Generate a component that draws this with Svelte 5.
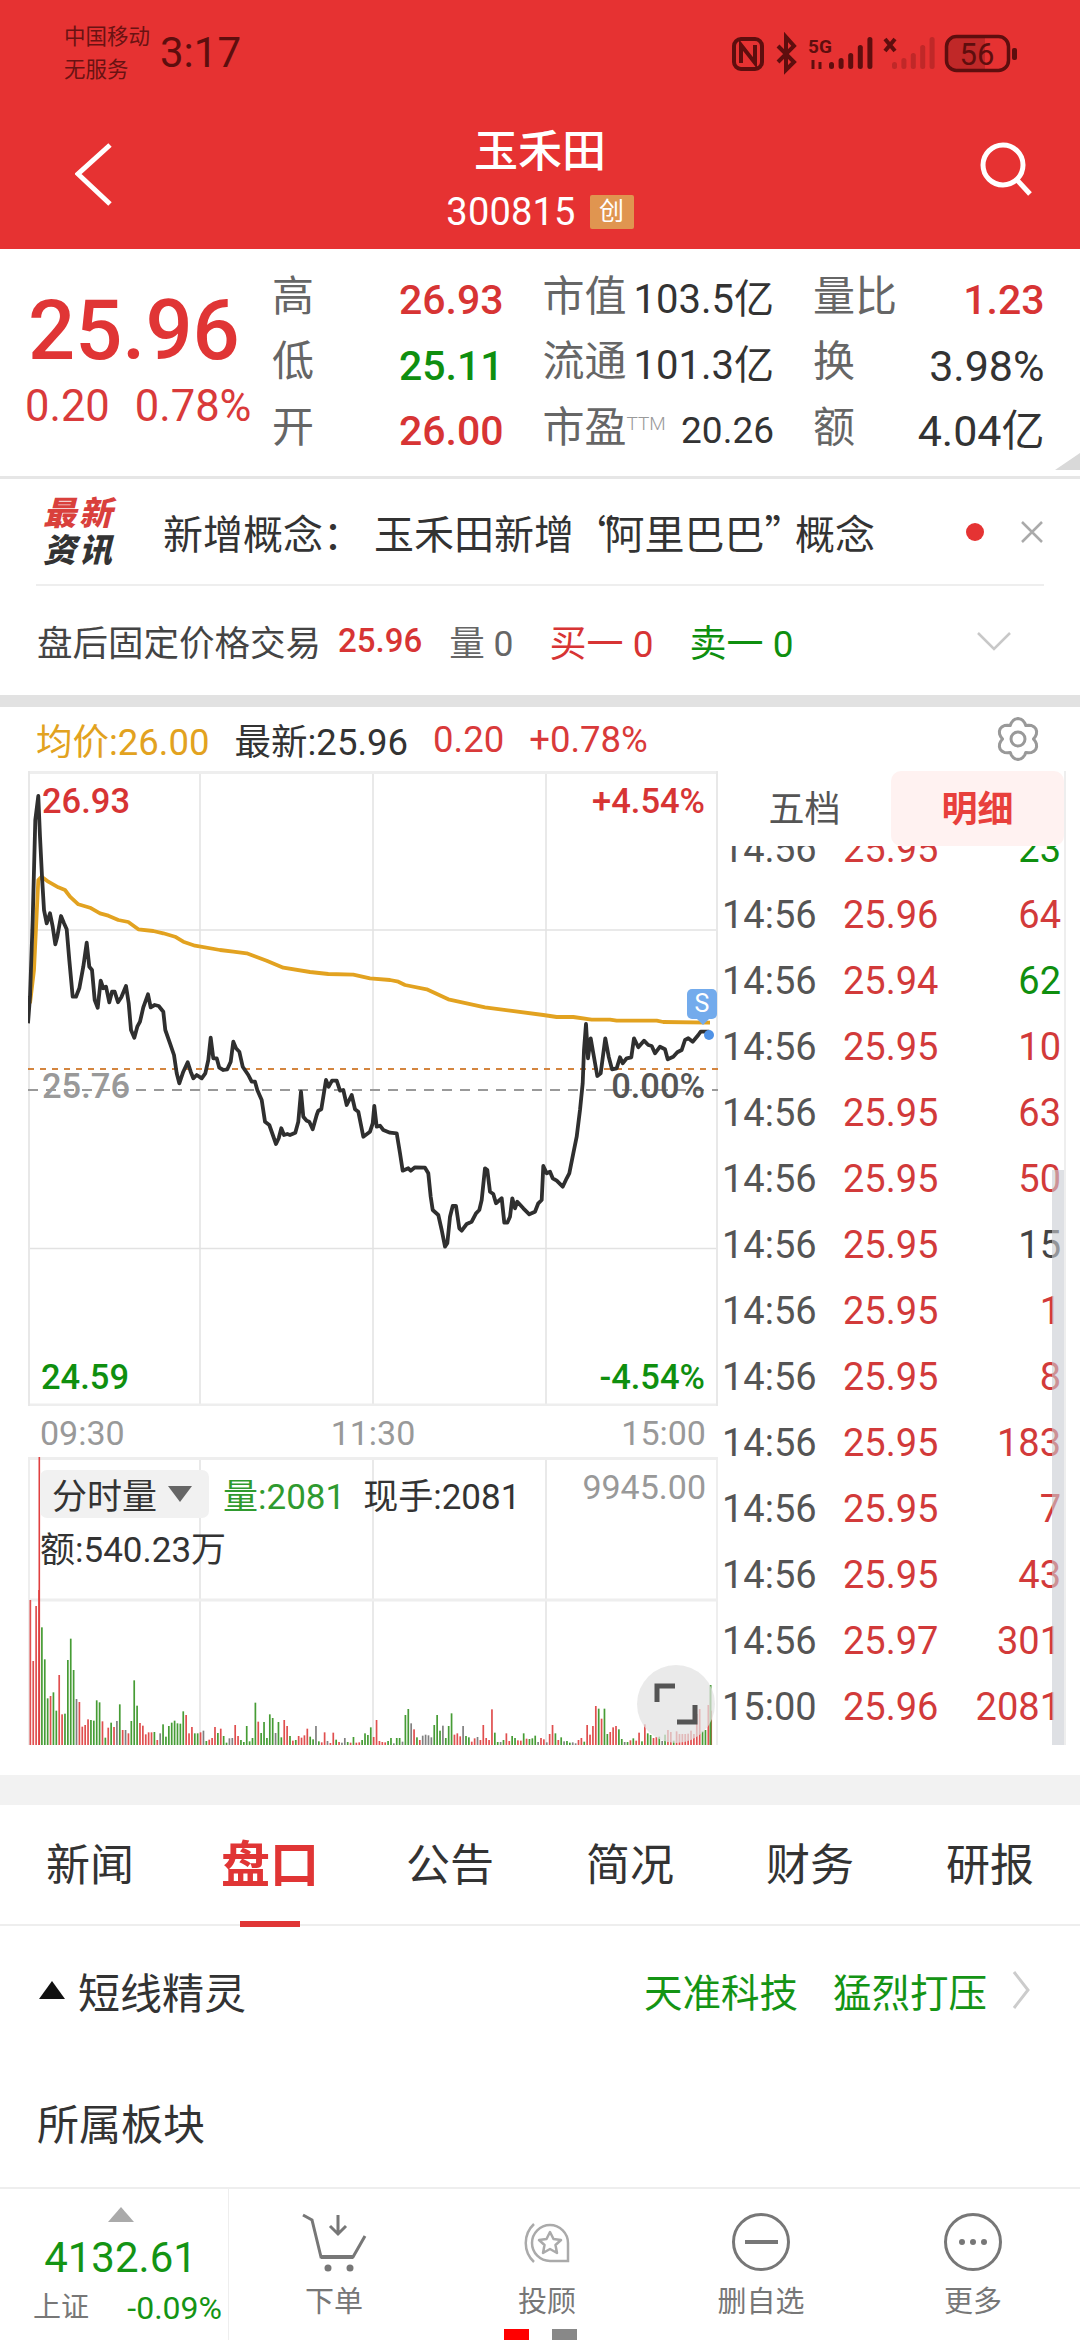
<script>
  const parse = (s, ox, oy) => s.trim().split(/\s+/).map((p) => {
    const [x, y] = p.split(',').map(Number);
    return `${(ox + x / 3).toFixed(1)},${(oy + y / 3).toFixed(1)}`;
  }).join(' ');

  const black =
    parse('24,760 30,680 38,450 46,150 55,78 60,200 66,320 72,420 80,460 90,430 98,470 106,523 112,500 123,438 132,460 140,478 148,570 158,680 168,680 178,655 190,590 200,518 208,590 216,600 224,690 233,713 242,632 250,655 258,650 268,697 276,665 284,665 294,697 304,682 318,648 326,700 333,780 343,803 352,770 360,755 370,712 384,673 392,712 404,705 416,708 430,725 436,780 450,820 462,855 470,910 478,940 490,905 503,877 512,905 520,925 530,915 545,925 556,910 565,870 572,803 580,865 590,865 598,893 610,900 622,898 632,875 640,815 648,835 658,845 668,890 685,915 695,935 705,935 712,960 725,990 735,1055 748,1065 768,1122 776,1105 784,1075 792,1095 802,1092 810,1095 826,1088 835,1055 843,965 850,1040 860,1052 868,1055 878,1078 890,1035 895,1022 904,1018 918,930 926,950 936,932 950,932 960,962 970,960 980,1005 995,975 1005,1018 1015,1025 1030,1100 1050,1085', 20, 770) +
    ' ' +
    parse('8,520 13,468 20,530 30,527 40,540 60,548 80,550 90,610 98,662 115,655 122,662 135,652 165,653 175,670 182,740 188,780 205,795 215,840 225,890 232,880 240,800 248,768 258,768 268,835 275,842 290,822 305,815 318,790 328,780 335,750 345,655 352,660 360,725 370,732 378,760 395,745 403,818 412,818 420,800 427,745 435,775 442,755 460,775 478,793 495,785 505,760 515,750 520,648 530,670 540,665 548,685 560,692 578,710 590,685 598,670 610,610 620,560 630,480 638,400 642,300 648,222 654,325 662,265 670,310 682,378 692,370 706,265 716,320 726,358 740,355 750,322 758,340 770,325 784,322 792,265 805,292 822,272 835,285 845,288 855,310 870,290 885,298 893,328 910,320 922,307 935,300 945,270 955,265 968,275 985,255 992,245 1018,245', 370, 950);

  const gold =
    parse('30,700 42,600 50,430 55,330 65,320 85,335 115,352 135,360 150,380 175,403 210,413 240,430 265,437 295,450 325,456 355,478 400,483 430,490 465,500 490,515 525,527 600,540 640,545 680,550 720,565 740,572 790,593 870,606 925,612 1000,614 1050,625', 20, 770) +
    ' ' +
    parse('60,90 85,95 105,105 170,118 235,148 345,172 420,182 520,195 560,201 610,201 665,209 720,209 740,212 860,212 880,216 1020,218', 370, 950);

  const barData =
    '30r 213r 48r 0r 112g 208g 325g 318r 307g 362g 255r 373r 371g 210g 146g 240g 327x 336r 410r 405r 388r 390g 392g 331g 337g 394r 443g 413r 398g 411r 393x 343g 420r 420x 430r 393g 271g 347g 399r 407r 433r 427r 427r 426g 450r 430x 403g 440g 408g 398g 392g 400g 401g 364g 375r 430r 411r 430g 430g 427r 422x 453g 449r 444r 411r 429g 416r 438g 458g 445x 444x 405r 438r 450g 456g 408g 454g 444g 338g 395r 429g 396g 444g 373g 384g 429x 396g 442g 390r 408r 438g 452r 450g 438r 443r 436r 416r 440g 448g 408x 454g 457r 427r 453x 459r 428r 449g 456r 458x 444x 456g 458r 441g 458r 457r 450g 430g 435g 412g 441r 390r ' +
    '453r 456r 457r 453g 444g 460x 444g 444g 455x 375g 357g 400x 418r 442g 450r 437x 434x 436x 442x 405g 375g 422g 407x 444g 408g 370g 434r 430r 439r 408x 438g 442g 455r 445r 441x 450r 405r 444r 450r 358r 428g 456g 456x 450g 430r 453r 438g 444g 451r 452r 430g 446r 447g 445g 437g 456x 444r 448r 457x 432r 405r 430g 450r 442g 454x 453g 458g 457x 460x 450r 444r 455g 405r 434r 408r 348r 356g 386r 356g 432g 426r 412r 408r 418g 447g 456x 456g 451r 445g 452r 428r 454g 403r 430g 435g 444r 441r 440g 453x 434g 420r 426r 452g 424r 432r 432r 432r 431r 422r 432r 372r 357r 424g 420g 345r 362r';
  const colors = { r: '#e04f4f', g: '#469c35', x: '#808080' };
  const bars = barData.trim().split(/\s+/).map((t, i) => ({
    x: 29.5 + i * 2.885,
    h: (465 - parseInt(t)) / 3,
    c: colors[t.slice(-1)]
  }));

  const gearPoints = Array.from({ length: 48 }, (_, i) => {
    const a = (i * 7.5 * Math.PI) / 180;
    const r = 15.5 + 5 * Math.abs(Math.sin(3 * a));
    return `${(22 + r * Math.cos(a)).toFixed(1)},${(22 + r * Math.sin(a)).toFixed(1)}`;
  }).join(' ');

  const tradeRows = [
    ['14:56', '25.95', '23', 'g'],
    ['14:56', '25.96', '64', 'r'],
    ['14:56', '25.94', '62', 'g'],
    ['14:56', '25.95', '10', 'r'],
    ['14:56', '25.95', '63', 'r'],
    ['14:56', '25.95', '50', 'r'],
    ['14:56', '25.95', '15', 'd'],
    ['14:56', '25.95', '1', 'r'],
    ['14:56', '25.95', '8', 'r'],
    ['14:56', '25.95', '183', 'r'],
    ['14:56', '25.95', '7', 'r'],
    ['14:56', '25.95', '43', 'r'],
    ['14:56', '25.97', '301', 'r'],
    ['15:00', '25.96', '2081', 'r']
  ];
  const tabs = ['新闻', '盘口', '公告', '简况', '财务', '研报'];
  const signalTops = [62, 58, 53, 45, 37];
</script>

<div class="page">
  <header class="header">
    <div class="status">
      <div class="carrier"><span>中国移动</span><span>无服务</span></div>
      <div class="clock">3:17</div>
      <svg class="status-icons" viewBox="725 30 295 45" width="295" height="45" aria-hidden="true">
        <rect x="734" y="39" width="28" height="30" rx="7" fill="none" stroke="#5e0e0e" stroke-width="4" />
        <path d="M741 63V45l14 18V45" fill="none" stroke="#5e0e0e" stroke-width="4" />
        <path d="M778 46l16 16-8 8V37l8 9-16 16" fill="none" stroke="#5e0e0e" stroke-width="4" />
        <text x="808" y="53" class="five-g">5G</text>
        <path d="M813 60v9M820 62v7" stroke="#5e0e0e" stroke-width="3" />
        {#each signalTops as t, i}
          <rect x={829 + i * 9.6} y={t} width="5" height={69 - t} rx="2.500" fill="#5e0e0e" />
          <rect x={892 + i * 9.4} y={t} width="5" height={69 - t} rx="2.500" fill="#5e0e0e" opacity="0.28" />
        {/each}
        <path d="M885 39l10 12M895 39l-10 12" stroke="#5e0e0e" stroke-width="4" />
        <rect x="946.500" y="36.500" width="62" height="34" rx="10" fill="none" stroke="#5e0e0e" stroke-width="3.500" />
        <path d="M957 38h28v31h-28a9 9 0 0 1-9-9V47a9 9 0 0 1 9-9z" fill="#5e0e0e" opacity="0.28" />
        <rect x="1012" y="48" width="5" height="12" rx="2" fill="#5e0e0e" />
        <text x="977" y="65" class="batt">56</text>
      </svg>
    </div>
    <div class="nav">
      <svg width="40" height="66" viewBox="0 0 40 66" aria-hidden="true">
        <polyline points="35,3 3,32 35,62" fill="none" stroke="#fff" stroke-width="5" />
      </svg>
      <div class="title">
        <div class="name">玉禾田</div>
        <div class="code"><span>300815</span><span class="chuang">创</span></div>
      </div>
      <svg width="54" height="56" viewBox="0 0 54 56" aria-hidden="true">
        <circle cx="24" cy="23" r="20" fill="none" stroke="#fff" stroke-width="5" />
        <path d="M38 38l13 14" stroke="#fff" stroke-width="5" />
      </svg>
    </div>
  </header>

  <section class="quote">
    <div class="quote-main">
      <div class="price">25.96</div>
      <div class="change"><span>0.20</span><span>0.78%</span></div>
    </div>
    <div class="quote-grid">
      <div class="cell"><span class="lbl">高</span><span class="val up">26.93</span></div>
      <div class="cell"><span class="lbl">市值</span><span class="val dark">103.5亿</span></div>
      <div class="cell"><span class="lbl">量比</span><span class="val up">1.23</span></div>
      <div class="cell"><span class="lbl">低</span><span class="val down">25.11</span></div>
      <div class="cell"><span class="lbl">流通</span><span class="val dark">101.3亿</span></div>
      <div class="cell"><span class="lbl">换</span><span class="val dark wide">3.98%</span></div>
      <div class="cell"><span class="lbl">开</span><span class="val up">26.00</span></div>
      <div class="cell"><span class="lbl">市盈<sup>TTM</sup></span><span class="val dark small">20.26</span></div>
      <div class="cell"><span class="lbl">额</span><span class="val dark wide">4.04亿</span></div>
    </div>
    <span class="corner"></span>
  </section>

  <section class="news">
    <div class="news-logo"><span class="l1">最新</span><span class="l2">资讯</span></div>
    <div class="news-text"><span class="colon">新增概念：</span>玉禾田新增<span class="quote-mark">“</span>阿里巴巴<span class="quote-mark">”</span>概念</div>
    <span class="dot"></span>
    <svg width="24" height="24" viewBox="0 0 24 24" aria-hidden="true">
      <path d="M2 2l20 20M22 2L2 22" stroke="#aaa" stroke-width="2.500" />
    </svg>
  </section>

  <section class="after">
    <span class="after-title">盘后固定价格交易</span>
    <span class="after-price">25.96</span>
    <span class="after-vol">量 0</span>
    <span class="after-buy">买一 0</span>
    <span class="after-sell">卖一 0</span>
    <svg width="36" height="20" viewBox="0 0 36 20" aria-hidden="true">
      <polyline points="2,2 18,18 34,2" fill="none" stroke="#c8c8c8" stroke-width="2.500" />
    </svg>
  </section>

  <div class="band"></div>

  <div class="legend">
    <span class="avg">均价:26.00</span>
    <span class="latest">最新:25.96</span>
    <span class="chg">0.20</span>
    <span class="chg">+0.78%</span>
    <svg class="gear" width="44" height="44" viewBox="0 0 44 44" aria-hidden="true">
      <polygon points={gearPoints} fill="none" stroke="#999" stroke-width="3" stroke-linejoin="round" />
      <circle cx="22" cy="22" r="7" fill="none" stroke="#999" stroke-width="3" />
    </svg>
  </div>

  <div class="market">
    <div class="chart-col">
      <div class="price-chart">
        <svg viewBox="28 771 690 635" width="690" height="635" aria-hidden="true">
          <g stroke="#e2e2e2" stroke-width="1.500">
            <path d="M200 771V1406M373 771V1406M546 771V1406" />
            <path d="M28 930H718M28 1248.500H718" />
          </g>
          <path d="M28 772.500H718M28 1405H718" stroke="#eee" stroke-width="3" />
          <path d="M29 771V1406M717 771V1406" stroke="#e8e8e8" stroke-width="2" />
          <path d="M28 1069H718" stroke="#d4853f" stroke-width="2" stroke-dasharray="6 6" />
          <path d="M28 1090H718" stroke="#999" stroke-width="2" stroke-dasharray="10 8" />
          <polyline points={gold} fill="none" stroke="#e2a220" stroke-width="3.800" stroke-linejoin="round" />
          <polyline points={black} fill="none" stroke="#2f2f2f" stroke-width="3.800" stroke-linejoin="round" />
          <path d="M697 1019h12l-6 6z" fill="#73abec" />
          <circle cx="709" cy="1035" r="5" fill="#4f92e6" />
        </svg>
        <span class="tag hi">26.93</span>
        <span class="tag hi-p">+4.54%</span>
        <span class="tag base">25.76</span>
        <span class="tag base-p">0.00%</span>
        <span class="tag lo">24.59</span>
        <span class="tag lo-p">-4.54%</span>
        <span class="s-badge">S</span>
      </div>
      <div class="axis"><span>09:30</span><span>11:30</span><span>15:00</span></div>
      <div class="vol-chart">
        <svg viewBox="28 1457 690 288" width="690" height="288" aria-hidden="true">
          <path d="M200 1457V1745M373 1457V1745M546 1457V1745" stroke="#e2e2e2" stroke-width="1.500" />
          <path d="M28 1458.500H718M28 1600H718" stroke="#eee" stroke-width="3" />
          <path d="M29 1457V1745M717 1457V1745" stroke="#eee" stroke-width="2" />
          {#each bars as b}
            <rect x={b.x} y={1745 - b.h} width="1.700" height={b.h} fill={b.c} />
          {/each}
          <rect x="38.500" y="1457" width="1.600" height="288" fill="#e04040" />
          <rect x="709.500" y="1685" width="2" height="60" fill="#469c35" />
        </svg>
        <div class="vol-info">
          <div class="vol-line">
            <span class="vol-pill">分时量<i class="caret"></i></span>
            <span class="vol-green">量:2081</span>
            <span class="vol-now">现手:2081</span>
          </div>
          <div class="vol-amount">额:540.23万</div>
        </div>
        <span class="vol-max">9945.00</span>
        <span class="expand">
          <svg width="44" height="42" viewBox="0 0 44 42" aria-hidden="true">
            <path d="M3 19V3h18M41 22v17H23" fill="none" stroke="#555" stroke-width="5" />
          </svg>
        </span>
      </div>
    </div>

    <div class="detail-col">
      <div class="detail-tabs">
        <span class="dt">五档</span>
        <span class="dt on">明细</span>
      </div>
      <div class="trades">
        <div class="trade-inner">
          {#each tradeRows as r}
            <div class="trade">
              <span class="t">{r[0]}</span>
              <span class="p">{r[1]}</span>
              <span class="v {r[3]}">{r[2]}</span>
            </div>
          {/each}
        </div>
        <span class="scroll"></span>
      </div>
    </div>
  </div>

  <div class="gap"></div>
  <div class="band2"></div>

  <nav class="tabs">
    {#each tabs as tab, i}
      <span class="tab" class:active={i === 1}>{tab}</span>
    {/each}
  </nav>

  <section class="sprite">
    <span class="tri"></span>
    <span class="sprite-title">短线精灵</span>
    <span class="sprite-green first">天准科技</span>
    <span class="sprite-green">猛烈打压</span>
    <svg width="18" height="40" viewBox="0 0 18 40" aria-hidden="true">
      <polyline points="2,2 16,20 2,38" fill="none" stroke="#ccc" stroke-width="3" />
    </svg>
  </section>

  <section class="sector">所属板块</section>

  <footer class="bottom">
    <div class="index">
      <span class="idx-tri"></span>
      <span class="idx-num">4132.61</span>
      <div class="idx-row"><span class="idx-name">上证</span><span class="idx-pct">-0.09%</span></div>
    </div>
    <div class="action a1">
      <svg width="66" height="64" viewBox="301 2212 66 64" aria-hidden="true">
        <path d="M303 2215l9 5 9 37h32l12-21" fill="none" stroke="#777" stroke-width="3" />
        <path d="M321 2257h32" stroke="#777" stroke-width="4" />
        <path d="M338 2215v19M330 2226l8 8 8-8" fill="none" stroke="#777" stroke-width="3" />
        <circle cx="328" cy="2268" r="3.500" fill="#777" />
        <circle cx="350" cy="2268" r="3.500" fill="#777" />
      </svg>
      <span>下单</span>
    </div>
    <div class="action a2">
      <svg width="66" height="64" viewBox="514 2212 66 64" aria-hidden="true">
        <path d="M568 2261h-18a18 18 0 1 1 18-18z" fill="none" stroke="#aaa" stroke-width="2.500" />
        <path d="M534 2224a26 26 0 0 0 0 38" fill="none" stroke="#aaa" stroke-width="2.500" />
        <path d="M550 2232l3.500 7 7.500 1-5.500 5 1.500 8-7-4-7 4 1.500-8-5.500-5 7.500-1z" fill="none" stroke="#aaa" stroke-width="2.500" stroke-linejoin="round" />
      </svg>
      <span>投顾</span>
    </div>
    <div class="action a3">
      <svg width="66" height="64" viewBox="728 2212 66 64" aria-hidden="true">
        <circle cx="761" cy="2242" r="27.500" fill="none" stroke="#777" stroke-width="3" />
        <path d="M745 2242h33" stroke="#777" stroke-width="4" />
      </svg>
      <span>删自选</span>
    </div>
    <div class="action a4">
      <svg width="66" height="64" viewBox="940 2212 66 64" aria-hidden="true">
        <circle cx="973" cy="2242" r="27.500" fill="none" stroke="#777" stroke-width="3" />
        <circle cx="962" cy="2242" r="3" fill="#777" />
        <circle cx="973" cy="2242" r="3" fill="#777" />
        <circle cx="984" cy="2242" r="3" fill="#777" />
      </svg>
      <span>更多</span>
    </div>
    <div class="pager"><span class="red"></span><span class="grey"></span></div>
  </footer>
</div>

<style>
  :global(body) { margin: 0; background: #fff; }
  :global(#app *) { box-sizing: border-box; }
  .page {
    width: 1080px;
    height: 2340px;
    overflow: hidden;
    position: relative;
    display: flex;
    flex-direction: column;
    font-family: Roboto, "Noto Sans CJK SC", sans-serif;
    color: #333;
    background: #fff;
  }

  .header { height: 249px; background: #e63232; color: #fff; flex: none; }
  .status { height: 104px; display: flex; align-items: flex-start; padding: 20px 0 0 64px; position: relative; }
  .carrier { display: flex; flex-direction: column; font-size: 21.500px; line-height: 33px; color: #6a1212; width: 96px; white-space: nowrap; }
  .clock { font-size: 42px; line-height: 66px; color: #5e0e0e; }
  .status-icons { margin-left: auto; margin-right: 60px; margin-top: 10px; }
  .five-g { font: 700 19px Roboto, sans-serif; fill: #5e0e0e; }
  .batt { font: 400 31px Roboto, sans-serif; fill: #5e0e0e; text-anchor: middle; }
  .nav { height: 145px; display: flex; align-items: flex-start; justify-content: space-between; padding: 38px 47px 0 75px; position: relative; }
  .title { position: absolute; left: 0; right: 0; top: 0; display: flex; flex-direction: column; align-items: center; }
  .name { font-size: 44px; line-height: 50px; font-weight: 500; margin-top: 23px; }
  .code { display: flex; align-items: center; gap: 14px; font-size: 38px; line-height: 46px; margin-top: 12px; letter-spacing: 0.2px; }
  .chuang { width: 44px; height: 34px; background: #e09550; font-size: 25px; line-height: 34px; text-align: center; border-radius: 2px; }

  .quote { height: 230px; flex: none; display: flex; position: relative; border-bottom: 3px solid #e6e6e6; }
  .quote-main { width: 272px; padding: 36px 0 0 25px; flex: none; }
  .price { font-size: 83px; line-height: 92px; font-weight: 500; color: #e03535; padding-left: 3px; }
  .change { display: flex; gap: 25px; font-size: 43.500px; line-height: 50px; color: #d93a3a; margin-top: 5px; white-space: nowrap; }
  .quote-grid { width: 773px; display: grid; grid-template-columns: repeat(3, 231.500px); column-gap: 39px; grid-auto-rows: 65.500px; padding-top: 17px; }
  .cell { display: flex; justify-content: space-between; align-items: center; white-space: nowrap; }
  .lbl { font-size: 42px; line-height: 50px; color: #666; margin-bottom: 4px; }
  .lbl sup { font-size: 19px; font-weight: 300; color: #999; vertical-align: 12px; line-height: 0; }
  .val { font-size: 41px; line-height: 50px; font-weight: 500; margin-top: 3px; }
  .val.up { color: #d73434; }
  .val.down { color: #0f8f0f; }
  .val.dark { color: #333; font-size: 40px; font-weight: 400; }
  .val.dark.wide { font-size: 43px; }
  .val.dark.small { font-size: 37px; }
  .corner { position: absolute; right: 0; bottom: 6px; width: 0; height: 0; border-left: 25px solid transparent; border-bottom: 17px solid #d9d9d9; }

  .news { height: 107px; flex: none; margin: 0 36px; display: flex; align-items: center; border-bottom: 2px solid #eee; }
  .news-logo { width: 127px; padding-left: 7px; display: flex; flex-direction: column; font-style: italic; font-weight: 900; font-size: 33px; line-height: 37px; letter-spacing: 3px; flex: none; }
  .l1 { color: #d9403c; }
  .l2 { color: #333; }
  .news-text { font-family: "Noto Sans CJK SC", sans-serif; font-size: 40px; color: #333; white-space: nowrap; flex: 1; }
  .colon { margin-right: 11px; }
  .quote-mark { margin-right: -9.500px; }
  .dot { width: 18px; height: 18px; border-radius: 50%; background: #e53333; margin-right: 36px; flex: none; }

  .after { height: 109px; flex: none; padding: 0 68px 0 37px; display: flex; align-items: center; font-size: 35.500px; white-space: nowrap; }
  .after-title { color: #444; }
  .after-price { color: #d73434; margin-left: 17px; font-weight: 500; font-size: 33px; }
  .after-vol { color: #666; margin-left: 27px; }
  .after-buy { color: #d73434; margin-left: 36px; font-size: 37px; }
  .after-sell { color: #0f8f0f; margin-left: 36px; font-size: 37px; }
  .after svg { margin-left: auto; }

  .band { height: 12px; background: #e2e2e2; flex: none; }

  .legend { height: 64px; flex: none; padding: 0 40px 0 36px; display: flex; align-items: center; gap: 25px; font-size: 36.500px; white-space: nowrap; position: relative; }
  .avg { color: #e2a220; }
  .latest { color: #333; }
  .chg { color: #d93a3a; }
  .gear { margin-left: auto; }

  .market { display: flex; flex: none; height: 974px; padding-left: 28px; }
  .chart-col { width: 690px; flex: none; }
  .price-chart { position: relative; height: 635px; }
  .price-chart svg, .vol-chart svg { display: block; }
  .tag { position: absolute; font-size: 34.500px; line-height: 40px; white-space: nowrap; }
  .hi { left: 14px; top: 10px; color: #d73434; font-weight: 500; }
  .hi-p { right: 13px; top: 10px; color: #d73434; font-weight: 500; }
  .base { left: 14px; top: 295px; color: #999; font-weight: 500; }
  .base-p { right: 13px; top: 295px; color: #555; font-weight: 500; }
  .lo { left: 13px; top: 586px; color: #0f8f0f; font-weight: 500; }
  .lo-p { right: 13px; top: 586px; color: #0f8f0f; font-weight: 500; }
  .s-badge { position: absolute; left: 659px; top: 218px; width: 30px; height: 30px; background: #73abec; color: #fff; border-radius: 5px; font-size: 25px; line-height: 30px; text-align: center; }

  .axis { height: 51px; padding: 3px 12px 0; display: flex; justify-content: space-between; align-items: center; font-size: 34px; color: #999; }
  .vol-chart { position: relative; height: 288px; }
  .vol-info { position: absolute; left: 12px; top: 11px; font-size: 35px; color: #333; }
  .vol-line { display: flex; align-items: center; gap: 18px; white-space: nowrap; }
  .vol-pill { display: flex; align-items: center; gap: 11px; width: 169px; height: 48px; background: #f1f1f1; border-radius: 7px; padding-left: 12px; font-size: 35px; }
  .caret { width: 0; height: 0; border-left: 12px solid transparent; border-right: 12px solid transparent; border-top: 16px solid #666; }
  .vol-green { color: #2f9a2f; margin-left: -4px; }
  .vol-now { color: #333; }
  .vol-amount { margin-top: 10px; line-height: 44px; }
  .vol-max { position: absolute; right: 12px; top: 10px; font-size: 34px; color: #999; }
  .expand { position: absolute; left: 609px; top: 208px; width: 78px; height: 78px; border-radius: 50%; background: rgba(226, 226, 226, 0.72); display: flex; align-items: center; justify-content: center; }

  .detail-col { width: 348px; flex: none; border-right: 2px solid #eee; }
  .detail-tabs { height: 75px; display: flex; padding-left: 173px; position: relative; }
  .dt { font-size: 36px; line-height: 78px; width: 173px; text-align: center; color: #555; }
  .dt:first-child { position: absolute; left: 0; width: 173px; }
  .dt.on { background: #fff2f1; border-radius: 10px; color: #e8403c; font-weight: 700; }
  .trades { height: 899px; overflow: hidden; position: relative; }
  .trade-inner { margin-top: -30px; }
  .trade { height: 66px; display: flex; align-items: center; padding: 0 3px 0 4px; font-size: 38px; }
  .t { width: 121px; color: #555; }
  .p { color: #d23a3a; }
  .v { flex: 1; text-align: right; }
  .v.r { color: #d23a3a; }
  .v.g { color: #0f8f0f; }
  .v.d { color: #444; }
  .scroll { position: absolute; right: 0; top: 324px; bottom: 0; width: 12px; background: rgba(200, 204, 210, 0.6); }

  .gap { height: 30px; flex: none; }
  .band2 { height: 30px; background: #f2f2f2; flex: none; }
  .tabs { height: 121px; flex: none; display: grid; grid-template-columns: repeat(6, 180px); border-bottom: 2px solid #eee; }
  .tab { font-size: 44px; line-height: 122px; text-align: center; color: #333; position: relative; }
  .tab.active { font-size: 49px; font-weight: 700; color: #e03535; }
  .tab.active::after { content: ""; position: absolute; left: 60px; bottom: 0; width: 60px; height: 6px; background: #e03535; }

  .sprite { height: 134px; flex: none; padding: 0 50px 6px 39px; display: flex; align-items: center; white-space: nowrap; }
  .tri { width: 0; height: 0; border-left: 13px solid transparent; border-right: 13px solid transparent; border-bottom: 18px solid #111; }
  .sprite-title { font-size: 42px; margin-left: 13px; color: #333; }
  .sprite-green { font-size: 38.500px; color: #149414; margin-left: 35px; }
  .sprite-green.first { margin-left: auto; }
  .sprite svg { margin-left: 25px; }
  .sector { height: 128px; flex: none; padding-left: 37px; font-size: 42px; line-height: 132px; color: #333; }

  .bottom { position: absolute; left: 0; right: 0; top: 2187px; height: 153px; border-top: 2px solid #eee; display: flex; background: #fff; }
  .index { width: 229px; flex: none; border-right: 1px solid #eee; display: flex; flex-direction: column; align-items: center; padding: 18px 0 0 13px; }
  .idx-tri { width: 0; height: 0; border-left: 13px solid transparent; border-right: 13px solid transparent; border-bottom: 15px solid #aaa; }
  .idx-num { font-size: 42px; line-height: 50px; color: #149414; margin-top: 11px; }
  .idx-row { display: flex; width: 216px; margin-left: -13px; padding: 0 0 0 27px; justify-content: space-between; align-items: center; line-height: 44px; margin-top: 3px; white-space: nowrap; }
  .idx-name { font-size: 28px; color: #777; }
  .idx-pct { font-size: 32px; color: #149414; }
  .action { position: absolute; top: 23px; width: 120px; display: flex; flex-direction: column; align-items: center; font-size: 29px; line-height: 36px; color: #777; }
  .action svg { display: block; margin-bottom: 8px; }
  .a1 { left: 274px; }
  .a2 { left: 487px; }
  .a3 { left: 701px; }
  .a4 { left: 913px; }
  .pager { position: absolute; left: 504px; bottom: 0; display: flex; gap: 23px; }
  .pager span { width: 25px; height: 11px; }
  .red { background: #f00; }
  .grey { background: #888; }
</style>
